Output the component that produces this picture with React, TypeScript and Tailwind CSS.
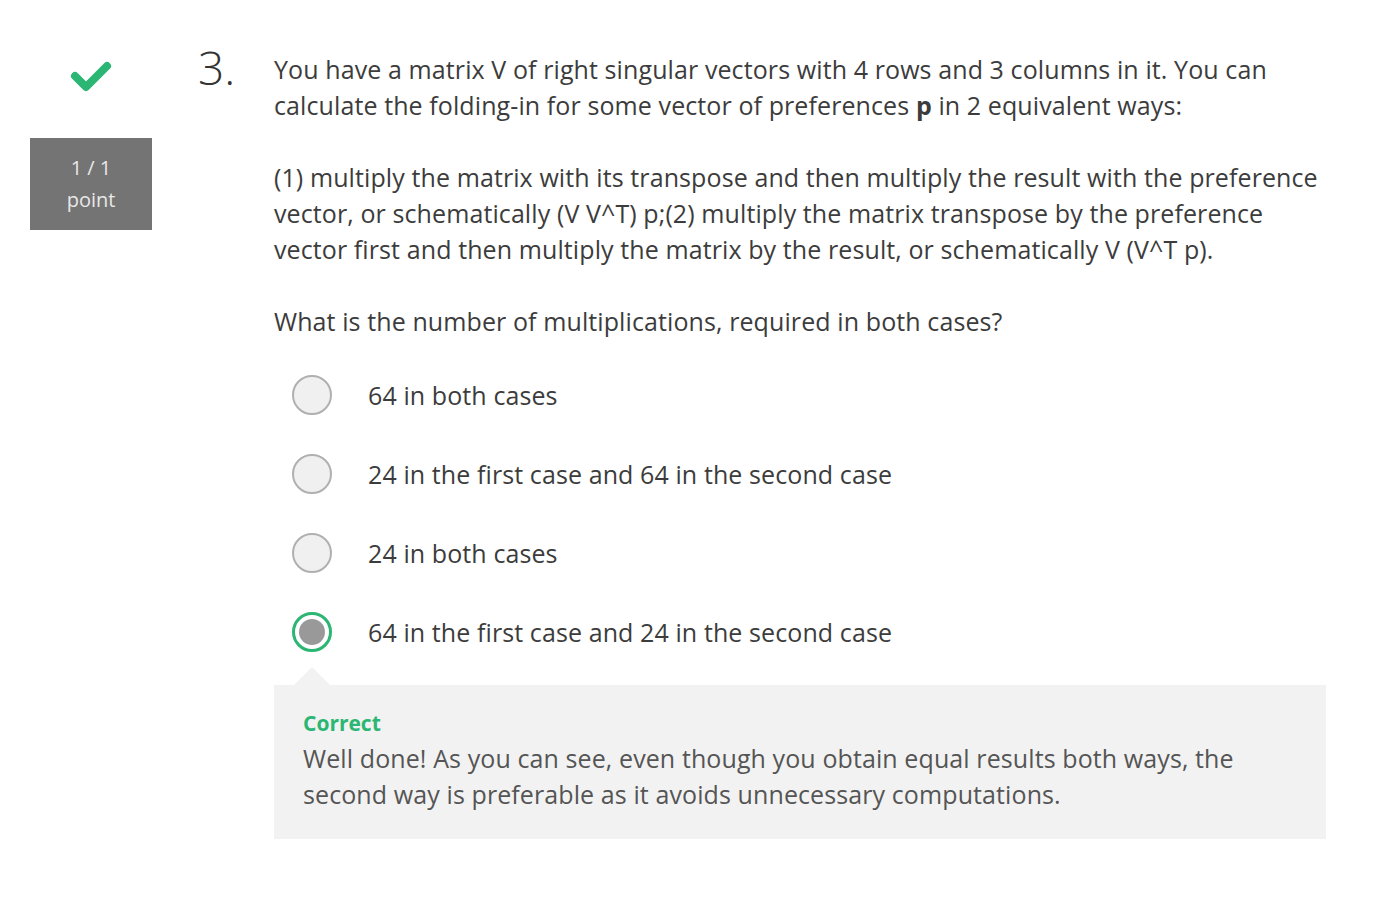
import React from "react";

const options = [
  "64 in both cases",
  "24 in the first case and 64 in the second case",
  "24 in both cases",
  "64 in the first case and 24 in the second case",
];

export default function App() {
  return (
    <div
      className="min-h-[914px] w-[1400px] bg-white text-[#373a3c]"
      style={{ fontFamily: '"Open Sans", "Noto Sans", sans-serif' }}
    >
      <div className="flex pl-[30px] pt-[51px]">
        <div className="flex w-[122px] flex-col items-center">
          <svg width="42" height="32" viewBox="0 0 42 32" className="mt-[10px]">
            <path
              d="M5 15 L16 26 L37 5"
              fill="none"
              stroke="#2bb673"
              strokeWidth="8"
              strokeLinecap="round"
              strokeLinejoin="round"
            />
          </svg>
          <div className="mt-[45px] flex h-[92px] w-[122px] flex-col items-center justify-center bg-[#747474] text-[20px] leading-[32px] text-[#e8e8e8]">
            <div>1 / 1</div>
            <div>point</div>
          </div>
        </div>
        <div className="ml-[46px] w-[76px] -mt-[14px] text-[46px] font-light leading-[60px] text-[#333]">
          3.
        </div>
        <div className="w-[1052px] text-[25px] leading-[36px] tracking-[0.1px] text-[#3c3c3c]">
          <p>
            You have a matrix V of right singular vectors with 4 rows and 3 columns in it. You can calculate the
            folding-in for some vector of preferences <b className="font-bold">p</b> in 2 equivalent ways:
          </p>
          <p className="mt-[36px]">
            (1) multiply the matrix with its transpose and then multiply the result with the preference vector, or
            schematically (V V^T) p;(2) multiply the matrix transpose by the preference vector first and then multiply
            the matrix by the result, or schematically V (V^T p).
          </p>
          <p className="mt-[36px]">What is the number of multiplications, required in both cases?</p>
          <div className="mt-[36px] flex flex-col gap-[39px] pl-[18px]">
            {options.map((o, i) => (
              <div key={i} className="flex h-[40px] items-center">
                {i === 3 ? (
                  <div className="flex h-[40px] w-[40px] items-center justify-center rounded-full border-[3px] border-[#2bb673] bg-white">
                    <div className="h-[26px] w-[26px] rounded-full bg-[#999]" />
                  </div>
                ) : (
                  <div className="h-[40px] w-[40px] rounded-full border-2 border-[#b0b0b0] bg-[#f0f0f0]" />
                )}
                <span className="ml-[36px]">{o}</span>
              </div>
            ))}
          </div>
          <div className="relative mt-[33px] bg-[#f2f2f2] pb-[27px] pl-[29px] pr-[29px] pt-[24px]">
            <div className="absolute left-[20px] top-[-18px] h-0 w-0 border-x-[18px] border-b-[18px] border-x-transparent border-b-[#f2f2f2]" />
            <div className="text-[21px] font-bold leading-[28px] tracking-normal text-[#2bb673]">Correct</div>
            <p className="mt-[3px] leading-[36px] text-[#555]">
              Well done! As you can see, even though you obtain equal results both ways, the second way is
              preferable as it avoids unnecessary computations.
            </p>
          </div>
        </div>
      </div>
    </div>
  );
}
